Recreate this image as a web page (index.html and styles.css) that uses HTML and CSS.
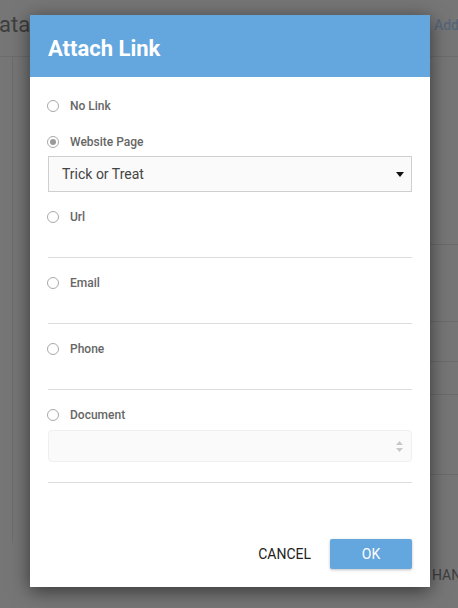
FILE: index.html
```html
<!DOCTYPE html>
<html>
<head>
<meta charset="utf-8">
<link rel="stylesheet" href="styles.css">
</head>
<body>
<div class="page">
  <div class="page-header">
    <span class="page-title">ata</span>
    <span class="page-add">Add l</span>
  </div>
  <div class="page-body">
    <div class="page-main"></div>
    <div class="page-rows">
      <div class="prow r1"></div>
      <div class="prow r2"></div>
      <div class="prow r3"></div>
      <div class="prow r4"></div>
      <div class="prow r5"></div>
      <div class="prow-text">HAN</div>
    </div>
  </div>
</div>

<div class="modal">
  <div class="modal-header">Attach Link</div>
  <div class="modal-body">
    <div class="opt"><span class="radio"></span><span class="label">No Link</span></div>
    <div class="opt"><span class="radio checked"></span><span class="label">Website Page</span></div>
    <div class="select">
      <span class="select-text">Trick or Treat</span>
      <svg class="caret" width="8" height="5" viewBox="0 0 8 5"><path d="M0 0H8L4 5Z" fill="#111"/></svg>
    </div>
    <div class="opt"><span class="radio"></span><span class="label">Url</span></div>
    <div class="field"></div>
    <div class="opt"><span class="radio"></span><span class="label">Email</span></div>
    <div class="field"></div>
    <div class="opt"><span class="radio"></span><span class="label">Phone</span></div>
    <div class="field"></div>
    <div class="opt"><span class="radio"></span><span class="label">Document</span></div>
    <div class="docbox">
      <svg class="updown" width="7" height="11" viewBox="0 0 7 11"><path d="M3.5 0L7 4H0Z M0 7H7L3.5 11Z" fill="#c8c8c8"/></svg>
    </div>
    <div class="field short"></div>
  </div>
  <div class="modal-footer">
    <span class="cancel">CANCEL</span>
    <span class="ok">OK</span>
  </div>
</div>
</body>
</html>
```

FILE: styles.css
```css
* { box-sizing: border-box; }
html, body {
  margin: 0;
  padding: 0;
  width: 458px;
  height: 608px;
  overflow: hidden;
  background: #767676;
  font-family: Roboto, "Liberation Sans", sans-serif;
}
.page { width: 458px; height: 608px; }
.page-header {
  height: 57px;
  border-bottom: 1px solid #6d6d6d;
  display: flex;
  justify-content: space-between;
  align-items: flex-start;
}
.page-title {
  font-size: 22px;
  color: #3e3e3e;
  margin-top: 12px;
  margin-left: -1px;
}
.page-add {
  font-size: 14px;
  color: #566679;
  margin-top: 17px;
  margin-right: -8px;
  font-weight: 500;
}
.page-body { display: flex; height: 551px; }
.page-main {
  margin-left: 12px;
  border-left: 1px solid #6c6c6c;
  height: 486px;
  flex: 1;
}
.page-rows { width: 28px; }
.prow { border-bottom: 1px solid #6b6b6b; }
.r1 { height: 188px; }
.r2 { height: 77px; }
.r3 { height: 40px; }
.r4 { height: 33px; }
.r5 { height: 80px; }
.prow-text {
  margin-top: 92px;
  font-size: 14px;
  color: #3e3e3e;
  margin-left: 2px;
}

.modal {
  position: absolute;
  left: 30px;
  top: 15px;
  width: 400px;
  height: 572px;
  background: #fff;
  box-shadow: 0 4px 18px rgba(0,0,0,0.55);
  display: flex;
  flex-direction: column;
}
.modal-header {
  height: 62px;
  background: #64a6de;
  color: #fff;
  font-size: 22px;
  font-weight: 700;
  padding: 22px 18px 0;
  line-height: 24px;
}
.modal-body {
  padding: 18px 18px 0;
  display: flex;
  flex-direction: column;
  flex: 1;
}
.opt {
  height: 20px;
  padding-top: 2px;
  display: flex;
  align-items: center;
  margin-bottom: 16px;
}
.opt + .select { margin-top: -11px; }
.radio {
  width: 12px;
  height: 12px;
  border-radius: 50%;
  border: 1px solid #a9a9a9;
  margin-left: -1px;
  margin-right: 11px;
  display: flex;
  align-items: center;
  justify-content: center;
}
.radio.checked::after {
  content: "";
  width: 6px;
  height: 6px;
  border-radius: 50%;
  background: #9a9a9a;
}
.label {
  font-size: 12px;
  font-weight: 500;
  color: #666;
}
.select {
  height: 36px;
  border: 1px solid #cfcfcf;
  background: #fafafa;
  display: flex;
  align-items: center;
  justify-content: space-between;
  padding: 0 7px 0 13px;
  margin-bottom: 14px;
}
.select-text { font-size: 14px; color: #444; }
.opt:has(+ .field), .opt:has(+ .docbox) { margin-bottom: 0; }
.field {
  height: 32px;
  border-bottom: 1px solid #dcdcdc;
  margin-bottom: 14px;
}
.docbox {
  margin-top: 6px;
  height: 32px;
  border: 1px solid #efefef;
  border-radius: 4px;
  background: #fafafa;
  display: flex;
  align-items: center;
  justify-content: flex-end;
  padding-right: 8px;
}
.field.short { height: 21px; }
.modal-footer {
  display: flex;
  justify-content: flex-end;
  align-items: center;
  gap: 19px;
  padding: 0 18px 18px;
}
.cancel { font-size: 14px; color: #222; }
.ok {
  width: 82px;
  height: 30px;
  background: #64a6de;
  color: #fff;
  font-size: 14px;
  border-radius: 2px;
  box-shadow: 0 1px 3px rgba(0,0,0,0.25);
  display: flex;
  align-items: center;
  justify-content: center;
}
```
